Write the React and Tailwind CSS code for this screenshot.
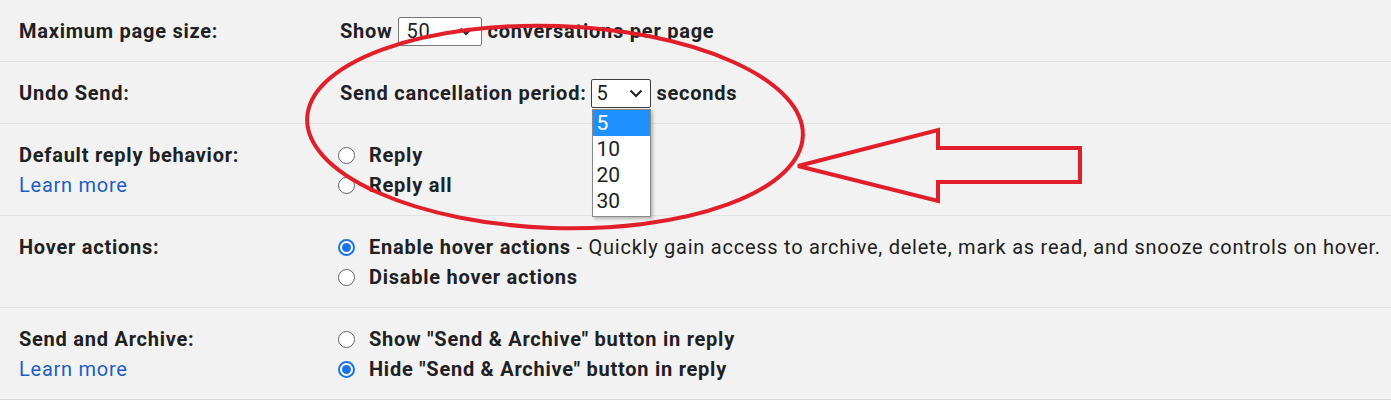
import React from "react";

const font = { fontFamily: "Roboto, 'Noto Sans', sans-serif" };

const Radio = ({ checked }) =>
  checked ? (
    <span className="w-[17px] h-[17px] rounded-full border-2 border-[#1a73e8] bg-white flex items-center justify-center shrink-0">
      <span className="w-[9px] h-[9px] rounded-full bg-[#1a73e8]" />
    </span>
  ) : (
    <span className="w-[17px] h-[17px] rounded-full border border-[#5f6368] bg-white shrink-0" />
  );

const Chevron = () => (
  <svg width="14" height="9" viewBox="0 0 14 9" className="shrink-0">
    <path d="M1.5 1.5 L7 7 L12.5 1.5" fill="none" stroke="#222" strokeWidth="2" />
  </svg>
);

const Option = ({ checked, bold, rest }) => (
  <div className="flex items-center h-[30px] gap-[14px]">
    <Radio checked={checked} />
    <span>
      <span className="font-bold">{bold}</span>
      {rest && <span className="font-normal">{rest}</span>}
    </span>
  </div>
);

const Row = ({ label, learn, children, last }) => (
  <div className={`flex pt-4 pb-[15px] border-b ${last ? "border-[#d6d6d6]" : "border-[#e2e2e2]"}`}>
    <div className="w-[338px] pl-[19px] shrink-0">
      <div className="h-[30px] flex items-center font-bold">{label}</div>
      {learn && <div className="h-[30px] flex items-center text-[#1a5fc4]">Learn more</div>}
    </div>
    <div className="flex-1">{children}</div>
  </div>
);

export default function App() {
  return (
    <div className="relative w-[1391px] h-[400px] bg-[#f2f2f2] text-[#202124] text-[20px] tracking-[0.75px] overflow-hidden" style={font}>
      <Row label="Maximum page size:">
        <div className="h-[30px] flex items-center font-bold pl-[2px]">
          <span>Show</span>
          <div className="ml-[5px] mr-[6px] w-[84px] h-[29px] border border-[#767676] rounded-[2px] bg-white flex items-center justify-between pl-[8px] pr-[8px] font-normal">
            <span>50</span>
            <Chevron />
          </div>
          <span>conversations per page</span>
        </div>
      </Row>
      <Row label="Undo Send:">
        <div className="h-[30px] flex items-center font-bold pl-[2px]">
          <span>Send cancellation period:</span>
          <div className="relative ml-[4px] mr-[6px] w-[60px] h-[29px] border border-[#3c3c3c] rounded-[2px] bg-white flex items-center justify-between pl-[5px] pr-[7px] font-normal">
            <span>5</span>
            <Chevron />
            <div className="absolute left-0 top-[29px] w-[59px] h-[108px] bg-white border border-[#8a8a8a] shadow-[2px_2px_3px_rgba(0,0,0,0.25)] overflow-hidden text-[21px] leading-[26px] tracking-normal">
              <div className="bg-[#1e90ff] text-white pl-[4px] h-[26px]">5</div>
              <div className="pl-[4px] h-[26px]">10</div>
              <div className="pl-[4px] h-[26px]">20</div>
              <div className="pl-[4px] h-[26px]">30</div>
            </div>
          </div>
          <span>seconds</span>
        </div>
      </Row>
      <Row label="Default reply behavior:" learn>
        <Option bold="Reply" />
        <Option bold="Reply all" />
      </Row>
      <Row label="Hover actions:">
        <Option checked bold="Enable hover actions" rest=" - Quickly gain access to archive, delete, mark as read, and snooze controls on hover." />
        <Option bold="Disable hover actions" />
      </Row>
      <Row label="Send and Archive:" learn last>
        <Option bold={'Show "Send & Archive" button in reply'} />
        <Option checked bold={'Hide "Send & Archive" button in reply'} />
      </Row>

      <svg className="absolute inset-0 pointer-events-none" width="1391" height="400" viewBox="0 0 1391 400">
        <ellipse cx="555" cy="127" rx="248" ry="101" transform="rotate(2 555 127)" fill="none" stroke="#e11f2b" strokeWidth="4" />
        <polygon
          points="798,166 938,130 938,148 1080,148 1080,182 938,182 938,201"
          fill="none"
          stroke="#e11f2b"
          strokeWidth="4"
          strokeLinejoin="miter"
        />
      </svg>
    </div>
  );
}
